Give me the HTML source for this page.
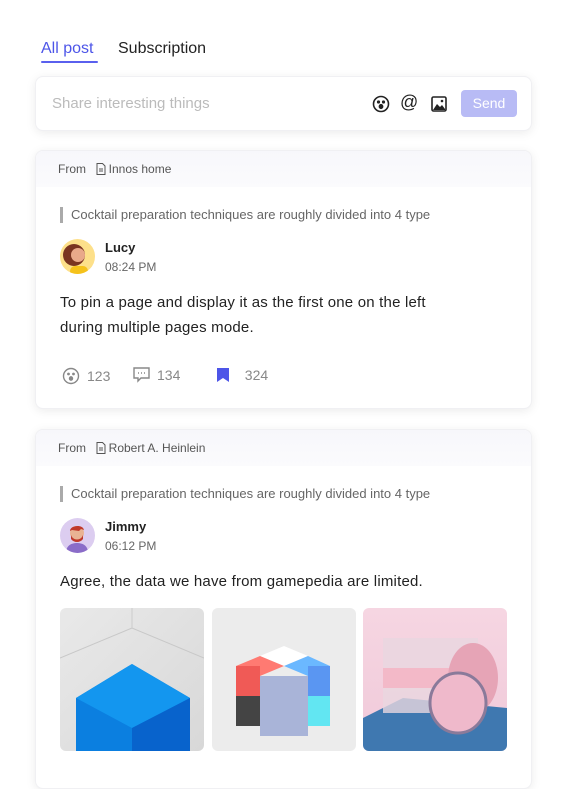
<!DOCTYPE html>
<html><head><meta charset="utf-8"><style>
*{box-sizing:border-box;margin:0;padding:0}
body{width:567px;height:758px;overflow:hidden;background:#fff;font-family:"Liberation Sans",sans-serif;position:relative;color:#1d1d1f}
.abs{position:absolute}
.tab{font-size:16px;top:40px}
.card{position:absolute;left:35px;width:497px;background:#fff;border-radius:8px;box-shadow:0 2px 10px rgba(0,0,0,0.08);border:1px solid #f0f0f3;overflow:hidden}
.hd{height:36px;background:linear-gradient(#f7f7fb,#fbfbfd);font-size:12px;color:#555;padding:0 0 0 22px;display:flex;align-items:center;gap:3px;line-height:12px}
.quote{position:absolute;left:24px;font-size:13px;color:#666;border-left:3px solid #aaa;padding-left:8px;line-height:16px}
.name{position:absolute;left:69px;font-size:13px;font-weight:bold;color:#222}
.time{position:absolute;left:69px;font-size:12px;color:#666}
.av{position:absolute;left:24px;width:35px;height:35px;border-radius:50%;overflow:hidden}
.txt{position:absolute;left:24px;font-size:15px;color:#222;line-height:25px;letter-spacing:0.2px}
.img{position:absolute;top:178px;width:144px;height:143px;border-radius:6px;overflow:hidden}
.st{position:absolute;top:216px;font-size:14px;color:#888;display:flex;align-items:center;gap:7px}
</style></head><body>
<div class="abs tab" style="left:41px;color:#4d55e8">All post</div>
<div class="abs" style="left:41px;top:61px;width:57px;height:2px;background:#5a60ee;border-radius:1px"></div>
<div class="abs tab" style="left:118px;color:#222">Subscription</div>

<div class="card" style="top:76px;height:55px">
  <div class="abs" style="left:16px;top:18px;font-size:15px;color:#bbb">Share interesting things</div>
  <svg class="abs" style="left:336px;top:18px" width="18" height="18" viewBox="0 0 18 18" fill="none" stroke="#222" stroke-width="1.6"><circle cx="9" cy="9" r="7.5"/><circle cx="6.5" cy="7" r=".8" fill="#222"/><circle cx="11.5" cy="7" r=".8" fill="#222"/><ellipse cx="9" cy="11.5" rx="1.6" ry="1.8" fill="#222"/></svg>
  <div class="abs" style="left:364px;top:15px;font-size:18px;color:#222">@</div>
  <svg class="abs" style="left:395px;top:19px" width="16" height="16" viewBox="0 0 16 16"><rect x="1" y="1" width="14" height="14" rx="1.5" fill="none" stroke="#222" stroke-width="1.6"/><path d="M2 14 L6 8 L9 11 L11 9 L14 13 V14Z" fill="#222"/><circle cx="11" cy="5" r="1.3" fill="#222"/></svg>
  <div class="abs" style="left:425px;top:13px;width:56px;height:27px;background:#b8bbf5;border-radius:4px;color:#fff;font-size:14px;text-align:center;line-height:27px">Send</div>
</div>

<div class="card" style="top:150px;height:259px">
  <div class="hd">From &nbsp;<svg width="10" height="12" viewBox="0 0 10 12" fill="none" stroke="#555" stroke-width="1"><path d="M1 .5h5.5L9 3v8.5H1z M3 6h4 M3 8h4"/></svg>Innos home</div>
  <div class="quote" style="top:56px">Cocktail preparation techniques are roughly divided into 4 type</div>
  <div class="av" style="top:88px;background:#fde08a"><svg width="35" height="35"><circle cx="14" cy="16" r="11" fill="#7a3420"/><circle cx="18" cy="16" r="7" fill="#e9a98a"/><rect x="10" y="27" width="18" height="10" rx="5" fill="#f5c21b"/></svg></div>
  <div class="name" style="top:89px">Lucy</div>
  <div class="time" style="top:109px">08:24 PM</div>
  <div class="txt" style="top:139px">To pin a page and display it as the first one on the left<br>during multiple pages mode.</div>
  <div class="st" style="left:26px"><svg width="18" height="18" viewBox="0 0 18 18" fill="none" stroke="#888" stroke-width="1.4"><circle cx="9" cy="9" r="7.5"/><circle cx="6.5" cy="7" r=".7" fill="#888"/><circle cx="11.5" cy="7" r=".7" fill="#888"/><ellipse cx="9" cy="11.5" rx="1.5" ry="1.7" fill="#888"/></svg>123</div>
  <div class="st" style="left:97px"><svg width="17" height="16" viewBox="0 0 17 16" fill="none" stroke="#888" stroke-width="1.4"><path d="M1 1h15v10H8l-3 3v-3H1z"/><path d="M5 6h1M8 6h1M11 6h1"/></svg>134</div>
  <div class="st" style="left:180px"><svg width="14" height="16" viewBox="0 0 14 16"><path d="M1 1h12v14l-6-4-6 4z" fill="#4d55e8"/></svg>&nbsp;&nbsp;324</div>
</div>

<div class="card" style="top:429px;height:360px">
  <div class="hd">From &nbsp;<svg width="10" height="12" viewBox="0 0 10 12" fill="none" stroke="#555" stroke-width="1"><path d="M1 .5h5.5L9 3v8.5H1z M3 6h4 M3 8h4"/></svg>Robert A. Heinlein</div>
  <div class="quote" style="top:56px">Cocktail preparation techniques are roughly divided into 4 type</div>
  <div class="av" style="top:88px;background:#dccdf0"><svg width="35" height="35"><path d="M6 35c0-8 6-10 11-10s11 2 11 10z" fill="#8a6cc8"/><circle cx="17" cy="15" r="7" fill="#e9b393"/><path d="M10 13c0-6 13-7 14-1l-3-1-2 2-7-1z" fill="#c0392b"/><path d="M11 17c2 6 10 6 12 0v4c-3 4-9 4-12 0z" fill="#c0392b"/></svg></div>
  <div class="name" style="top:89px">Jimmy</div>
  <div class="time" style="top:109px">06:12 PM</div>
  <div class="txt" style="top:139px">Agree, the data we have from gamepedia are limited.</div>
  <div class="img" style="left:24px;background:linear-gradient(135deg,#e9e9e9,#d8d8d8)"><svg width="144" height="143"><path d="M0 50L72 20L144 50" stroke="#c8c8c8" fill="none"/><line x1="72" y1="0" x2="72" y2="20" stroke="#ccc"/><path d="M16 90L72 56L130 90V143H16z" fill="#0b7fe0"/><path d="M16 90L72 56L130 90L72 120z" fill="#1396ef"/><path d="M72 120V143H130V90z" fill="#0863cc"/></svg></div>
  <div class="img" style="left:176px;background:#ececec"><svg width="144" height="143"><path d="M48 48L72 38L96 48L72 58z" fill="#fff"/><path d="M24 58L48 48L72 58L48 68z" fill="#ff7a72"/><path d="M72 58L96 48L118 58L96 68z" fill="#6bb8ff"/><rect x="24" y="58" width="24" height="30" fill="#f05a56"/><rect x="24" y="88" width="24" height="30" fill="#444"/><rect x="48" y="68" width="48" height="60" fill="#a9b4d8"/><rect x="96" y="58" width="22" height="30" fill="#5a96f2"/><rect x="96" y="88" width="22" height="30" fill="#62e6f2"/></svg></div>
  <div class="img" style="left:327px;background:linear-gradient(#f6d6e2,#f0c9d9)"><svg width="144" height="143"><path d="M0 110L40 90L144 100V143H0z" fill="#3f78b0"/><rect x="20" y="30" width="95" height="75" fill="#e8d7e0" opacity=".8"/><rect x="20" y="60" width="95" height="20" fill="#f3b9c8"/><ellipse cx="110" cy="70" rx="25" ry="35" fill="#e6a4b6"/><ellipse cx="95" cy="95" rx="28" ry="30" fill="#efb9cb" stroke="#8a7a9a" stroke-width="3"/></svg></div>
</div>
</body></html>
